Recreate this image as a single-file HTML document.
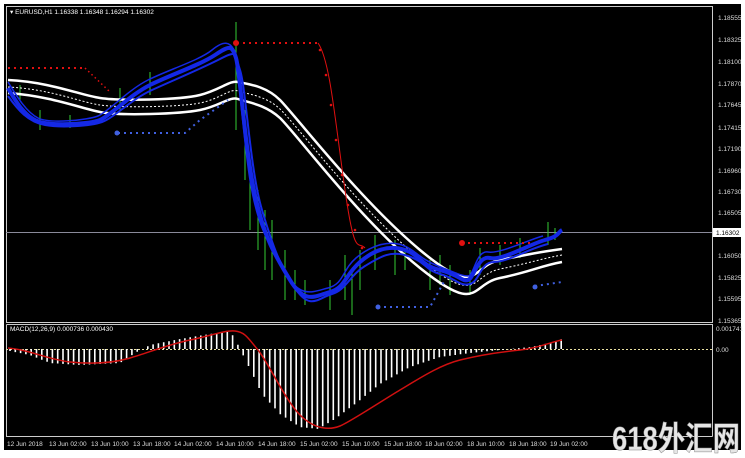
<!DOCTYPE html>
<html><head><meta charset="utf-8"><style>
html,body{margin:0;padding:0;background:#fff;width:745px;height:458px;overflow:hidden}
svg{display:block}
text{font-family:"Liberation Sans",sans-serif}
</style></head><body>
<svg width="745" height="458" viewBox="0 0 745 458" xmlns="http://www.w3.org/2000/svg">
<rect x="0" y="0" width="745" height="458" fill="#fff"/>
<rect x="4" y="4" width="737" height="446" fill="#000"/>
<g fill="none" stroke="#ccc" stroke-width="1">
<path d="M6.5 6.5H712.5V322.5H6.5Z"/>
<path d="M6.5 324.5H712.5V436.5"/>
<path d="M6.5 324.5V436.5H712.5"/>
</g>
<g font-size="6.5" fill="#ddd">
<text x="718" y="20">1.18555</text><text x="718" y="42">1.18325</text><text x="718" y="64">1.18100</text>
<text x="718" y="86">1.17870</text><text x="718" y="107">1.17645</text><text x="718" y="130">1.17415</text>
<text x="718" y="151">1.17190</text><text x="718" y="173">1.16960</text><text x="718" y="194">1.16730</text>
<text x="718" y="215">1.16505</text><text x="718" y="258">1.16050</text><text x="718" y="280">1.15825</text>
<text x="718" y="301">1.15595</text><text x="718" y="323">1.15365</text>
<text x="716" y="331">0.001741</text><text x="716" y="352">0.00</text>
</g>
<rect x="713" y="228" width="28" height="9" fill="#fff"/>
<text x="716" y="235" font-size="6.5" fill="#000">1.16302</text>
<line x1="6" y1="232.5" x2="712" y2="232.5" stroke="#8a8a9a" stroke-width="1"/>
<text x="10" y="14" font-size="6.5" fill="#fff">▾ EURUSD,H1  1.16338 1.16348 1.16294 1.16302</text>
<g stroke="#3c3" stroke-width="1">
<path d="M236 22V130M120 88V110M150 72V95M245 110V180M250 160V230M258 190V250M265 210V270M272 220V280M285 250V300M295 270V300M305 280V305M330 280V310M345 255V300M352 270V315M360 250V290M375 235V270M395 240V275M405 248V270M430 260V290M440 255V285M450 265V295M470 270V295M480 248V275M500 245V265M520 238V258M548 222V245M555 228V240M40 110V130M70 115V128M20 85V100"/>
</g>
<g fill="none" stroke="#fff">
<path stroke-width="2.5" d="M8 80C50 82 80 95 100 98S180 100 200 95S230 80 238 82S265 85 280 100S360 200 420 250S470 266 500 260S540 252 562 249"/>
<path stroke-width="2.5" d="M8 93C50 96 80 108 100 112S180 114 200 110S230 96 238 99S265 104 280 118S360 220 420 268S470 284 500 278S540 266 562 262"/>
<path stroke-width="1" stroke-dasharray="2,2" d="M8 87C50 89 80 102 100 105S180 107 200 103S230 88 238 91S265 95 280 109S360 210 420 259S470 275 500 269S540 259 562 255"/>
</g>
<g fill="none" stroke="#1428e6" stroke-linejoin="round">
<path stroke-width="4" d="M8 88C15 100 25 118 40 122S90 124 100 120S130 95 150 85S200 65 215 55S232 45 236 58S245 150 255 195S275 255 290 280S315 296 330 292S345 275 360 262S390 245 405 250S420 265 440 270S462 282 468 280S478 255 490 258S530 244 545 240S558 232 562 230"/>
<path stroke-width="2" d="M8 96C18 110 28 122 45 125S90 126 102 122S130 100 152 90S198 70 218 60S234 52 240 70S250 170 262 210S280 265 295 288S318 298 332 294S350 275 365 266S390 250 408 256S425 270 440 274S460 287 470 284S480 262 494 262S530 248 548 244"/>
<path stroke-width="1.5" d="M8 82C16 95 26 112 38 118S88 120 98 116S128 90 148 80S200 60 212 50S230 42 234 50S242 130 250 180S270 245 285 272S312 292 328 288S342 270 356 258S388 240 402 245S418 258 438 266S462 276 468 276S476 250 488 252S528 240 543 236"/>
</g>
<g fill="#e01010">
<path d="M85 68L110 92" stroke="#e01010" stroke-width="1.5" stroke-dasharray="1.5,3" fill="none"/>
<path d="M318 43C330 60 335 120 345 190S358 240 365 248" stroke="#e01010" stroke-width="1" fill="none"/>
<path d="M462 243H530" stroke="#e01010" stroke-width="2" stroke-dasharray="2,4" fill="none"/>
<circle cx="236" cy="43" r="3"/><circle cx="462" cy="243" r="3"/>
<circle cx="320" cy="50" r="1.3"/><circle cx="326" cy="75" r="1.3"/><circle cx="331" cy="105" r="1.3"/><circle cx="336" cy="140" r="1.3"/><circle cx="342" cy="175" r="1.3"/><circle cx="348" cy="205" r="1.3"/><circle cx="355" cy="230" r="1.3"/><circle cx="362" cy="248" r="1.3"/>
</g>
<g stroke="#e01010" stroke-width="2" stroke-dasharray="2,4"><path d="M237 43H318"/><path d="M8 68H85"/></g>
<g fill="#4060e0" stroke="#4060e0">
<path d="M118 133H185L200 120L228 100" stroke-width="2" stroke-dasharray="2,4" fill="none"/>
<path d="M378 307H430L445 280" stroke-width="2" stroke-dasharray="2,4" fill="none"/>
<path d="M535 286L562 282" stroke-width="2" stroke-dasharray="2,4" fill="none"/>
<circle cx="117" cy="133" r="2.5" stroke="none"/><circle cx="378" cy="307" r="2.5" stroke="none"/><circle cx="535" cy="287" r="2.5" stroke="none"/>
</g>
<text x="10" y="331" font-size="6.5" fill="#fff">MACD(12,26,9) 0.000736 0.000430</text>
<line x1="6" y1="349.5" x2="712" y2="349.5" stroke="#e8e0a0" stroke-width="1" stroke-dasharray="2,2"/>
<path id="hist" fill="none" stroke="#fff" stroke-width="1.6" d=""/>
<path fill="none" stroke="#d01010" stroke-width="1.5" d="M8 348C30 350 50 360 70 362S110 364 130 358S170 344 190 340S225 330 235 331S248 338 258 350S285 400 300 415S330 430 340 426S380 402 400 390S440 365 460 360S500 352 520 350S550 342 562 340"/>
<g font-size="6.5" fill="#ddd">
<text x="7" y="446">12 Jun 2018</text><text x="49" y="446">13 Jun 02:00</text><text x="91" y="446">13 Jun 10:00</text>
<text x="133" y="446">13 Jun 18:00</text><text x="174" y="446">14 Jun 02:00</text><text x="216" y="446">14 Jun 10:00</text>
<text x="258" y="446">14 Jun 18:00</text><text x="300" y="446">15 Jun 02:00</text><text x="342" y="446">15 Jun 10:00</text>
<text x="384" y="446">15 Jun 18:00</text><text x="425" y="446">18 Jun 02:00</text><text x="467" y="446">18 Jun 10:00</text>
<text x="509" y="446">18 Jun 18:00</text><text x="550" y="446">19 Jun 02:00</text>
</g>
<text x="612" y="450" font-size="33" font-weight="bold" fill="#e6e6e6" stroke="#888" stroke-width="0.5" textLength="128" lengthAdjust="spacingAndGlyphs" style='font-family:"Liberation Sans","Noto Sans CJK SC",sans-serif'>618外汇网</text>
</svg>
<script>
(function(){
var pts=[[10,-2],[30,-6],[50,-14],[80,-16],[120,-14],[135,-4],[150,4],[180,10],[210,15],[230,18],[236,8],[242,-4],[250,-20],[262,-45],[280,-65],[300,-78],[318,-80],[335,-70],[355,-55],[380,-35],[410,-18],[440,-8],[470,-4],[500,-1],[530,2],[550,6],[562,10]];
function h(x){for(var i=0;i<pts.length-1;i++){if(x>=pts[i][0]&&x<=pts[i+1][0]){var t=(x-pts[i][0])/(pts[i+1][0]-pts[i][0]);return pts[i][1]+t*(pts[i+1][1]-pts[i][1]);}}return 0;}
var d="";for(var x=10;x<=562;x+=5.3){var v=h(x);d+="M"+x.toFixed(1)+" 349V"+(349-v).toFixed(1);}
document.getElementById("hist").setAttribute("d",d);
})();
</script>
</body></html>
